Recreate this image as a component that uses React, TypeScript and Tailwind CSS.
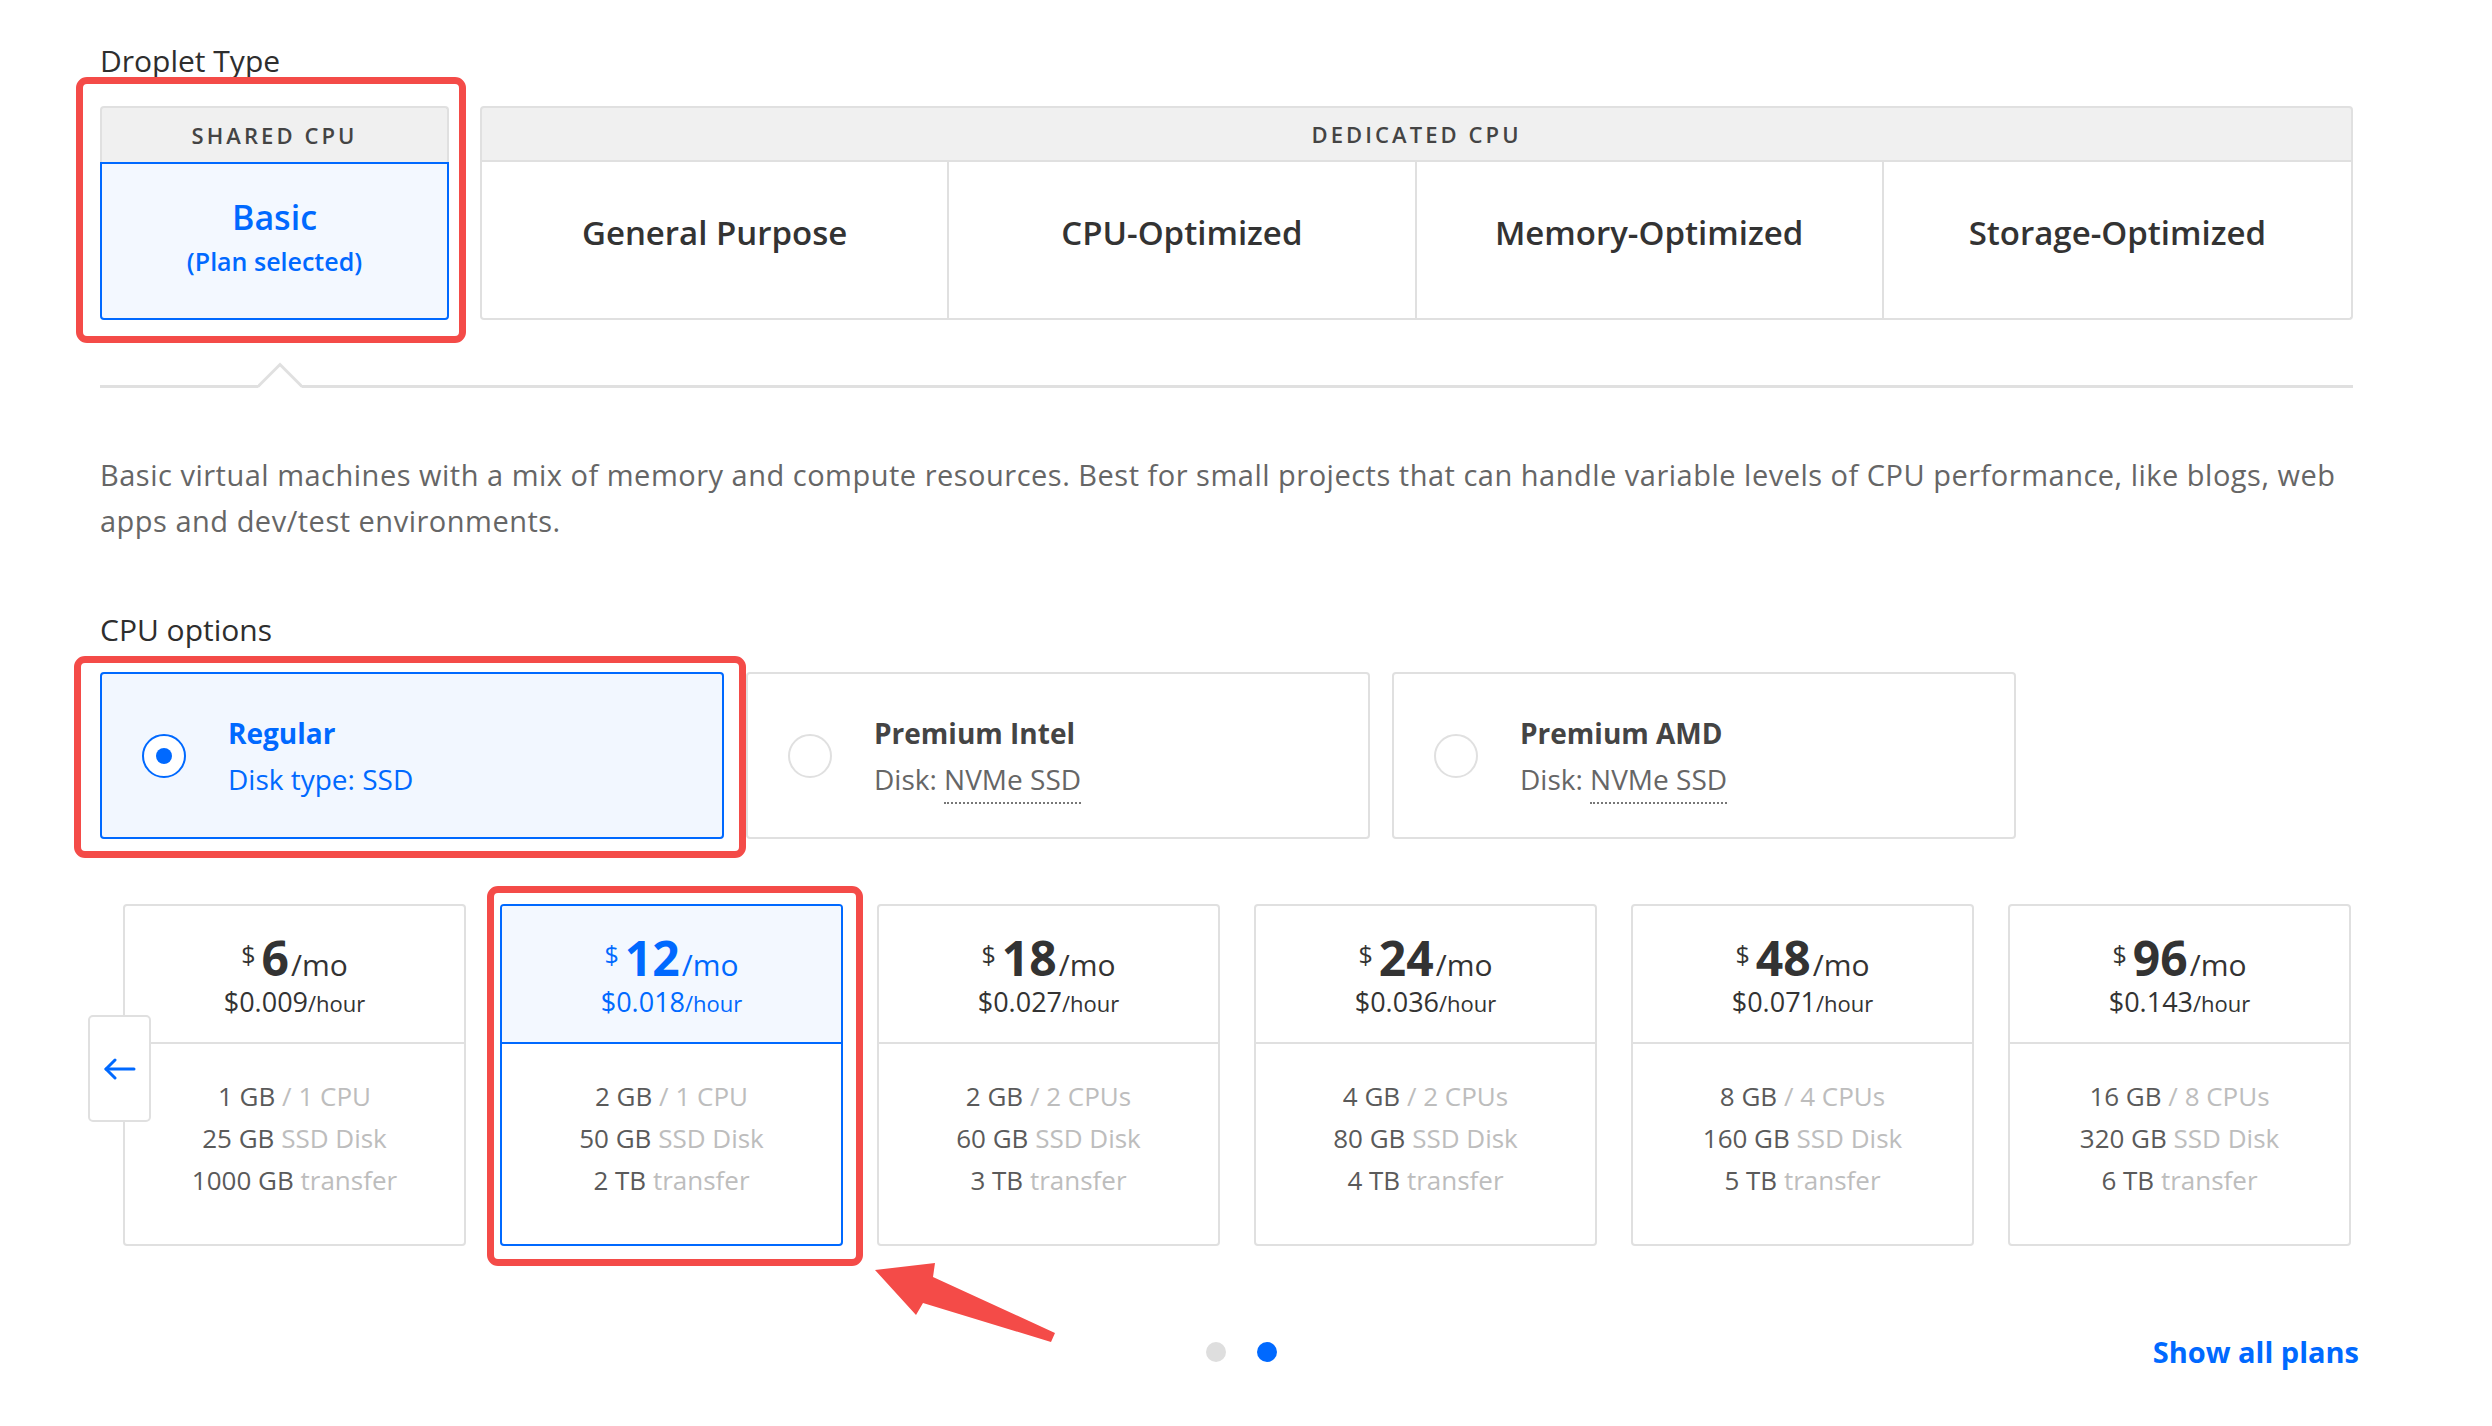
import React from "react";

const plans = [
  { mo: "6", hr: "0.009", ram: "1 GB", cpu: "1 CPU", disk: "25 GB", transfer: "1000 GB" },
  { mo: "12", hr: "0.018", ram: "2 GB", cpu: "1 CPU", disk: "50 GB", transfer: "2 TB", selected: true },
  { mo: "18", hr: "0.027", ram: "2 GB", cpu: "2 CPUs", disk: "60 GB", transfer: "3 TB" },
  { mo: "24", hr: "0.036", ram: "4 GB", cpu: "2 CPUs", disk: "80 GB", transfer: "4 TB" },
  { mo: "48", hr: "0.071", ram: "8 GB", cpu: "4 CPUs", disk: "160 GB", transfer: "5 TB" },
  { mo: "96", hr: "0.143", ram: "16 GB", cpu: "8 CPUs", disk: "320 GB", transfer: "6 TB" },
];

const dedicated = ["General Purpose", "CPU-Optimized", "Memory-Optimized", "Storage-Optimized"];

// red markup frame drawn over a selected element
function RedFrame({ className }: { className: string }) {
  return (
    <div
      className={`pointer-events-none absolute z-20 rounded-[11px] border-[7px] border-[#f44b48] ${className}`}
    />
  );
}

function Radio({ checked }: { checked?: boolean }) {
  return (
    <div
      className={`flex h-[44px] w-[44px] shrink-0 items-center justify-center rounded-full border-2 bg-white ${
        checked ? "border-[#0069ff]" : "border-[#e0e0e0]"
      }`}
    >
      {checked && <div className="h-[16px] w-[16px] rounded-full bg-[#0069ff]" />}
    </div>
  );
}

function CpuOption({
  title,
  label,
  value,
  checked,
}: {
  title: string;
  label: string;
  value: string;
  checked?: boolean;
}) {
  return (
    <div
      className={`flex h-[167px] w-[624px] items-center rounded-[4px] border-2 pl-[40px] ${
        checked ? "border-[#0069ff] bg-[#f2f7ff]" : "border-[#e0e0e0] bg-white"
      }`}
    >
      <Radio checked={checked} />
      <div className="ml-[42px] flex flex-col">
        <div
          className={`text-[28px] font-bold leading-[36px] ${checked ? "text-[#0069ff]" : "text-[#444]"}`}
        >
          {title}
        </div>
        <div className={`mt-[10px] text-[28px] leading-[36px] ${checked ? "text-[#0069ff]" : "text-[#666]"}`}>
          {checked ? (
            <span>
              {label} {value}
            </span>
          ) : (
            <span>
              {label}{" "}
              <span className="border-b-2 border-dotted border-[#777] pb-[4px]">{value}</span>
            </span>
          )}
        </div>
      </div>
    </div>
  );
}

function PlanCard({ plan }: { plan: (typeof plans)[number] }) {
  const sel = !!plan.selected;
  return (
    <div
      className={`flex h-[342px] flex-col overflow-hidden rounded-[4px] border-2 bg-white ${
        sel ? "border-[#0069ff]" : "border-[#e0e0e0]"
      }`}
    >
      <div
        className={`flex h-[138px] flex-col items-center justify-center border-b-2 ${
          sel ? "border-[#0069ff] bg-[#f3f8ff] text-[#0069ff]" : "border-[#e0e0e0] text-[#333]"
        }`}
      >
        <div className="flex items-baseline">
          <span className="relative top-[-12px] mr-[6px] text-[25px] leading-none">$</span>
          <span className="text-[48px] font-bold leading-[56px]">{plan.mo}</span>
          <span className="ml-[2px] text-[30px] leading-none">/mo</span>
        </div>
        <div className="text-[27px] leading-[32px]">
          ${plan.hr}
          <span className="text-[22px]">/hour</span>
        </div>
      </div>
      <div className="flex flex-col items-center pt-[31px] text-[26px] leading-[42px] text-[#5a5a5a]">
        <div>
          {plan.ram} <span className="text-[#bdbdbd]">/ {plan.cpu}</span>
        </div>
        <div>
          {plan.disk} <span className="text-[#bdbdbd]">SSD Disk</span>
        </div>
        <div>
          {plan.transfer} <span className="text-[#bdbdbd]">transfer</span>
        </div>
      </div>
    </div>
  );
}

export default function App() {
  return (
    <div className="min-h-screen w-full bg-white font-['Open_Sans',sans-serif] text-[#333]">
      <div className="relative ml-[100px] w-[2253px] pt-[43px]">
        {/* Droplet type */}
        <h2 className="text-[30px] font-medium leading-[36px] text-[#2e2e2e]">Droplet Type</h2>
        <div className="mt-[27px] flex gap-[31px]">
          <div className="relative w-[349px] shrink-0">
            <RedFrame className="bottom-[-23px] left-[-24px] right-[-17px] top-[-29px]" />
            <div className="flex h-[56px] items-center justify-center rounded-t-[4px] border-2 border-b-0 border-[#e0e0e0] bg-[#f0f0f0] text-[22px] font-semibold tracking-[0.14em] text-[#444]">
              SHARED CPU
            </div>
            <div className="flex h-[158px] flex-col items-center justify-center rounded-b-[4px] border-2 border-[#0069ff] bg-[#f3f8ff] pb-[8px] text-[#0069ff]">
              <div className="text-[34px] font-semibold leading-[40px]">Basic</div>
              <div className="mt-[8px] text-[25px] font-semibold leading-[32px]">(Plan selected)</div>
            </div>
          </div>
          <div className="flex-1">
            <div className="flex h-[56px] items-center justify-center rounded-t-[4px] border-2 border-[#e0e0e0] bg-[#f0f0f0] text-[22px] font-semibold tracking-[0.14em] text-[#444]">
              DEDICATED CPU
            </div>
            <div className="grid h-[158px] grid-cols-4 divide-x-2 divide-[#e0e0e0] rounded-b-[4px] border-2 border-t-0 border-[#e0e0e0]">
              {dedicated.map((d) => (
                <div key={d} className="flex items-center justify-center pb-[14px] text-[33px] font-semibold leading-[40px] text-[#333]">
                  {d}
                </div>
              ))}
            </div>
          </div>
        </div>

        {/* divider with pointer */}
        <div className="relative mt-[65px] h-[3px] bg-[#e0e0e0]">
          <svg className="absolute left-[158px] top-[-23px] h-[26px] w-[44px]" viewBox="0 0 44 26">
            <polygon points="0,26 22,2 44,26" fill="#fff" />
            <polyline points="0,24.5 22,2.5 44,24.5" fill="none" stroke="#e0e0e0" strokeWidth="3" />
          </svg>
        </div>

        <p className="mt-[64px] text-[29px] leading-[46px] tracking-[0.5px] text-[#666]">
          Basic virtual machines with a mix of memory and compute resources. Best for small projects that can handle
          variable levels of CPU performance, like blogs, web
          <br />
          apps and dev/test environments.
        </p>

        {/* CPU options */}
        <h2 className="mt-[68px] text-[30px] font-medium leading-[36px] text-[#2e2e2e]">CPU options</h2>
        <div className="mt-[24px] flex gap-[22px]">
          <div className="relative">
            <RedFrame className="bottom-[-19px] left-[-26px] right-[-22px] top-[-16px]" />
            <CpuOption title="Regular" label="Disk type:" value="SSD" checked />
          </div>
          <CpuOption title="Premium Intel" label="Disk:" value="NVMe SSD" />
          <CpuOption title="Premium AMD" label="Disk:" value="NVMe SSD" />
        </div>

        {/* plans carousel */}
        <div className="relative ml-[23px] mt-[65px] grid w-[2228px] grid-cols-6 gap-[34px]">
          <button className="absolute left-[-35px] top-[111px] z-10 flex h-[107px] w-[63px] items-center justify-center rounded-[5px] border-2 border-[#e0e0e0] bg-white">
            <svg width="32" height="22" viewBox="0 0 32 22" fill="none" stroke="#0069ff" strokeWidth="3" strokeLinecap="round" strokeLinejoin="round">
              <line x1="2" y1="11" x2="30" y2="11" />
              <polyline points="11,2 2,11 11,20" />
            </svg>
          </button>
          {plans.map((p) => (
            <div key={p.mo} className="relative">
              {p.selected && <RedFrame className="bottom-[-20px] left-[-13px] right-[-20px] top-[-18px]" />}
              <PlanCard plan={p} />
            </div>
          ))}
        </div>

        <div className="ml-[23px] mt-[88px] grid w-[2236px] grid-cols-[1fr_auto_1fr] items-center">
          <div />
          <div className="flex gap-[31px]">
            <div className="h-[20px] w-[20px] rounded-full bg-[#dedede]" />
            <div className="h-[20px] w-[20px] rounded-full bg-[#0069ff]" />
          </div>
          <a className="justify-self-end text-[29px] font-bold leading-[36px] text-[#0069ff]">Show all plans</a>
        </div>

        {/* red markup arrow */}
        <svg className="pointer-events-none absolute left-[770px] top-[1258px] z-20 h-[90px] w-[190px]" viewBox="0 0 190 90">
          <polygon points="5,12 65,5 63,19 185,75 181,84 53,45 46,57" fill="#f44b48" />
        </svg>
      </div>
    </div>
  );
}
